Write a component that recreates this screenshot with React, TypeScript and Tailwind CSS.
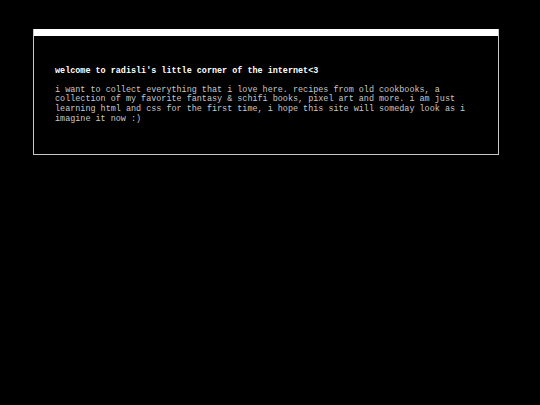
export default function App() {
  return (
    <div className="w-[540px] h-[405px] bg-black overflow-hidden pt-[29px] pl-[33px]" style={{ fontFamily: '"Courier New", Courier, "Nimbus Mono PS", "FreeMono", "Liberation Mono", monospace' }}>
      <div className="w-[466px] h-[126px] border border-[#c8c8c8] border-t-0 flex flex-col">
        <div className="h-[7px] bg-white shrink-0" />
        <div className="pl-[21px] pr-[21px] pt-[31px]">
          <h1 className="text-[8.45px] leading-[9.7px] font-bold text-white">welcome to radisli's little corner of the internet&lt;3</h1>
          <p className="mt-[9px] text-[8.45px] leading-[9.67px] text-[#c8c8c8]">
            i want to collect everything that i love here. recipes from old cookbooks, a collection of my favorite fantasy &amp; schifi books, pixel art and more. i am just learning html and css for the first time, i hope this site will someday look as i imagine it now :)
          </p>
        </div>
      </div>
    </div>
  );
}
